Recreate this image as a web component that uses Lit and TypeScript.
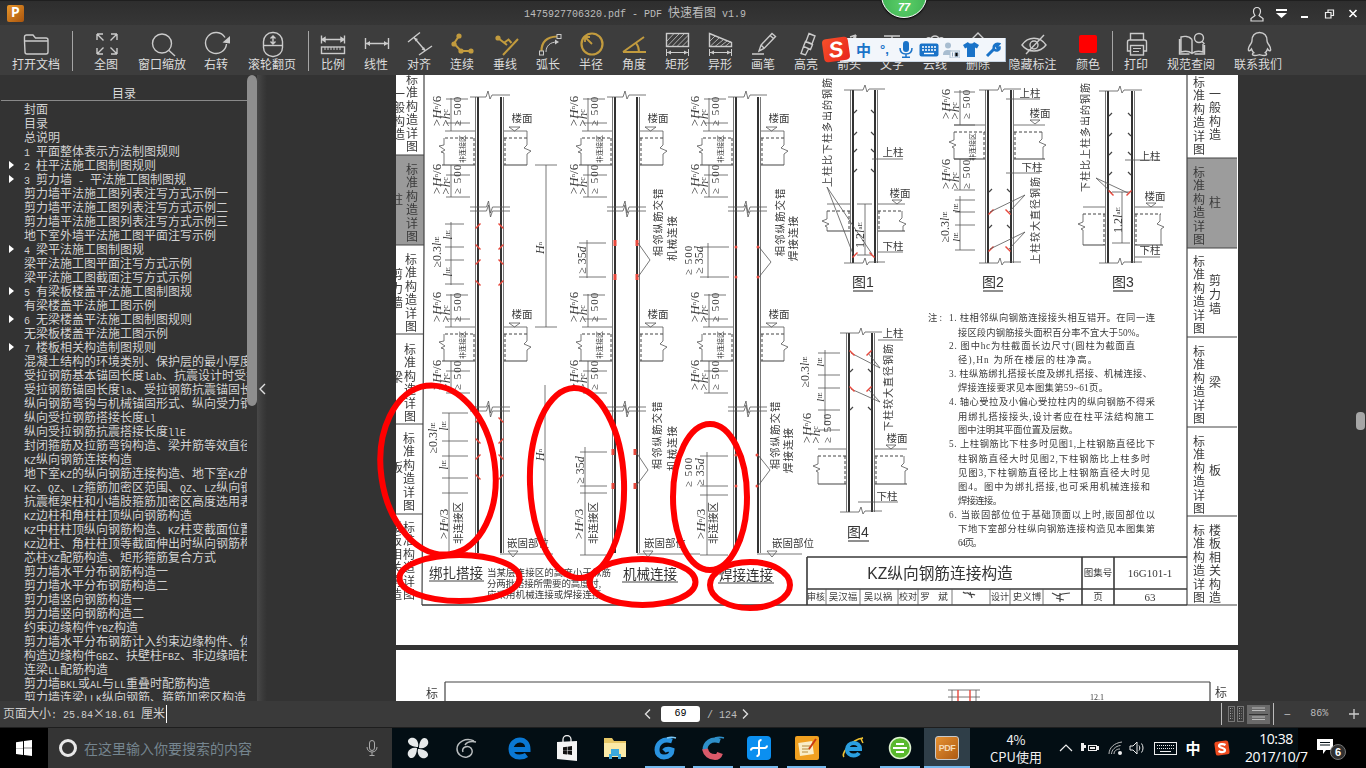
import { LitElement, html, css, svg } from 'lit';
import { customElement } from 'lit/decorators.js';

// ---- helpers for latin runs, which are 6px wide per char in the original bitmap font
const mixed = (text: string) =>
  text.split(/([\x20-\x7e]+)/).map((part, i) => (i % 2 ? html`<span class="l">${part}</span>` : part));

// ---- toolbar icons (30x26 box, center of box = center of the label)
const G = '#c29b3e';
const ic = {
  open: svg`<path d="M3.5 10V6a2 2 0 0 1 2-2h6.5l2.5 3h10.5a2 2 0 0 1 2 2v12a2 2 0 0 1-2 2h-19a2 2 0 0 1-2-2zM3.5 10h23.5"/>`,
  full: svg`<path d="M6 3h6M6 3v6M6 3l6.5 6.5M26 3h-6M26 3v6M26 3l-6.5 6.5M6 23h6M6 23v-6M6 23l6.5-6.5M26 23h-6M26 23v-6M26 23l-6.5-6.5"/>`,
  zoom: svg`<circle cx="15" cy="12.5" r="9.5"/><path d="M22 19.5l6 5.5"/>`,
  rot: svg`<path d="M24 6.5A10.5 10.5 0 1 0 25.5 13"/><path class="fill" d="M29 5v7.5l-7.5-1z"/>`,
  wheel: svg`<rect x="6.5" y="1.5" width="19" height="24" rx="9"/><path d="M6.5 14.5h19"/><path d="M16 5v8M13.5 7.5L16 5l2.5 2.5M13.5 10.5L16 13l2.5-2.5"/>`,
  scale: svg`<path d="M3.5 4.5v8M26.5 4.5v8M4 8.5h22M4 8.5l3-2v4zM26 8.5l-3-2v4z"/><rect x="3.5" y="16" width="23" height="6.5"/><path stroke-width="1" d="M7 16v3M10 16v3M13 16v3M16 16v3M19 16v3M22 16v3"/>`,
  line: svg`<path d="M4.5 7v11M27.5 7v11M5 12.5h22"/><path class="fill" d="M5 12.5l4-2.5v5zM27 12.5l-4-2.5v5z"/>`,
  align: svg`<path d="M4 11L16 1.5M15 24l13-9M10 6.5l11.5 13.5"/><path class="fill" d="M10 6.5l4 1.5-2.5 2.5zM21.5 20l-4-1.5 2.5-2.5z"/>`,
  chain: svg`<g stroke="${G}" stroke-width="2"><path d="M12 5L7 12.5 14 20h10"/></g><g fill="${G}" stroke="none"><circle cx="12" cy="5" r="2.6"/><circle cx="7" cy="13" r="2.6"/><circle cx="14" cy="20" r="2.6"/><circle cx="24" cy="20" r="2.6"/></g>`,
  perp: svg`<g stroke="${G}" stroke-width="2"><path d="M8 7l9 7M28 8L13 24M14.5 11.5l4-3 3 3.5"/></g><circle cx="8" cy="7" r="2.6" fill="${G}" stroke="none"/>`,
  arc: svg`<path stroke="${G}" stroke-width="2.2" d="M8.5 20C8.5 11 14 6 24 5.5"/><path stroke-width="1" d="M13 21c0-6 4-10 11-10"/><path class="fill" d="M26 11l-4-2.5v5z"/><rect stroke-width="1" x="6.5" y="20" width="4" height="4"/><rect stroke-width="1" x="24" y="3.5" width="4" height="4"/>`,
  radius: svg`<circle cx="16" cy="13" r="10.5" stroke="${G}" stroke-width="2.2"/><path stroke="${G}" stroke-width="1.8" d="M16 13L9.5 6.5M9 11V6h5"/>`,
  angle: svg`<path stroke="${G}" stroke-width="2" d="M4 21h23M4 21L25 6M17 12c2 2.5 3 5 3 9"/>`,
  rect: svg`<rect x="4.5" y="2.5" width="22" height="13"/><path stroke-width=".8" d="M5 10l7-7.5M5 15.5L17 3M10 15.5L22 3M15 15.5L26.5 4M20 15.5l6.5-6.5"/><path stroke-width="1" d="M4.5 18v7M26.5 18v7M5 21.5h21"/><path class="fill" d="M5 21.5l4-2v4zM26 21.5l-4-2v4z"/>`,
  shape: svg`<path d="M4.5 2.5l22 9v4h-22z"/><path stroke-width=".8" d="M5 10l5-5M5 15.5L14 7M10 15.5L18 9M15 15.5L22 10M20 15.5l6-5"/><path stroke-width="1" d="M4.5 18v7M26.5 18v7M5 21.5h21"/><path class="fill" d="M5 21.5l4-2v4zM26 21.5l-4-2v4z"/>`,
  pen: svg`<path d="M4 23h12M11 20l2-6L24 2.5l3.5 3L16 17.5zM13 14l3.5 3.5M22 4.5l3.5 3"/>`,
  mark: svg`<path d="M18 2.5l6 2.5-3 8-6-2.5zM14.5 10.5l7 3-2 5-7-3zM12.5 15.5l-2.5 7 4.5 1.5 3-6"/>`,
  arrow: svg`<path d="M8 22L22 4M22 4l-6 2M22 4l-1 6"/>`,
  textT: svg`<path d="M7 5h16M15 5v18"/>`,
  cloud: svg`<path d="M6 14c-3-5 2-9 5-6 1-4 7-4 8 0 3-3 8 1 5 6"/>`,
  del: svg`<path d="M15 2l8 8H7zM8 10v12h14V10"/>`,
  hide: svg`<path d="M4 14c6-9 18-9 24 0-6 8-18 8-24 0z"/><circle cx="16" cy="14" r="4"/><path d="M26 4L8 23"/>`,
  color: svg`<rect x="6" y="4" width="18" height="18" rx="2" fill="#f00" stroke="none"/>`,
  print: svg`<path d="M9.5 9V2.5h13V9M9.5 20H6.5V11a2 2 0 0 1 2-2h15a2 2 0 0 1 2 2v9h-3"/><rect x="9.5" y="14.5" width="13" height="9.5"/><path stroke-width="1" d="M12 17.5h8M12 20.5h6"/>`,
  book: svg`<path d="M16 8.5C13 5 8 5 5 6v15c3-1 8-1 11 1.5 3-2.5 8-2.5 11-1.5v-8M16 8.5v14M3.5 8v15h10M28.5 14v9h-10"/><circle cx="23" cy="7" r="4.5"/><path d="M26 10.5l2.5 2.5"/>`,
  qq: svg`<path d="M16.5 1.5c-5 0-7.5 3.500-7.5 8 0 1-.3 2-1 3-1.5 2-3 5-2.5 7 .4 1 2 0 3-1.500.5 1.500 1.200 2.800 2.300 3.700-1.800.8-2.300 2.800 1 2.800 2 0 3.500-.5 4.700-.8 1.200.3 2.700.8 4.700.8 3.300 0 2.800-2 1-2.800 1.100-.9 1.800-2.200 2.300-3.700 1 1.500 2.600 2.500 3 1.500.5-2-1-5-2.500-7-.7-1-1-2-1-3 0-4.500-2.500-8-7.500-8z"/>`,
};

type Tool = { label?: string; w: number; icon?: any; sep?: boolean };
const tools: Tool[] = [
  { label: '打开文档', w: 72, icon: ic.open },
  { sep: true, w: 1 },
  { label: '全图', w: 66, icon: ic.full },
  { label: '窗口缩放', w: 46, icon: ic.zoom },
  { label: '右转', w: 62, icon: ic.rot },
  { label: '滚轮翻页', w: 50, icon: ic.wheel },
  { w: 11 },
  { sep: true, w: 1 },
  { w: 2.5 },
  { label: '比例', w: 43, icon: ic.scale },
  { label: '线性', w: 43, icon: ic.line },
  { label: '对齐', w: 43, icon: ic.align },
  { label: '连续', w: 43, icon: ic.chain },
  { label: '垂线', w: 43, icon: ic.perp },
  { label: '弧长', w: 43, icon: ic.arc },
  { label: '半径', w: 43, icon: ic.radius },
  { label: '角度', w: 43, icon: ic.angle },
  { label: '矩形', w: 43, icon: ic.rect },
  { label: '异形', w: 43, icon: ic.shape },
  { label: '画笔', w: 43, icon: ic.pen },
  { label: '高亮', w: 43, icon: ic.mark },
  { label: '箭头', w: 43, icon: ic.arrow },
  { label: '文字', w: 43, icon: ic.textT },
  { label: '云线', w: 43, icon: ic.cloud },
  { label: '删除', w: 43, icon: ic.del },
  { label: '隐藏标注', w: 66, icon: ic.hide },
  { label: '颜色', w: 45, icon: ic.color },
  { w: 1.5 },
  { sep: true, w: 1 },
  { label: '打印', w: 46, icon: ic.print },
  { label: '规范查阅', w: 64, icon: ic.book },
  { label: '联系我们', w: 70, icon: ic.qq },
];

// [text, has arrow]
const outline: [string, boolean?][] = [
  ['封面'], ['目录'], ['总说明'], ['1 平面整体表示方法制图规则'], ['2 柱平法施工图制图规则', true],
  ['3 剪力墙 - 平法施工图制图规', true], ['剪力墙平法施工图列表注写方式示例一'], ['剪力墙平法施工图列表注写方式示例二'],
  ['剪力墙平法施工图列表注写方式示例三'], ['地下室外墙平法施工图平面注写示例'], ['4 梁平法施工图制图规', true],
  ['梁平法施工图平面注写方式示例'], ['梁平法施工图截面注写方式示例'], ['5 有梁板楼盖平法施工图制图规', true],
  ['有梁楼盖平法施工图示例'], ['6 无梁楼盖平法施工图制图规则', true], ['无梁板楼盖平法施工图示例'],
  ['7 楼板相关构造制图规则', true], ['混凝土结构的环境类别、保护层的最小厚度'], ['受拉钢筋基本锚固长度lab、抗震设计时受拉钢筋'],
  ['受拉钢筋锚固长度la、受拉钢筋抗震锚固长度'], ['纵向钢筋弯钩与机械锚固形式、纵向受力钢筋'], ['纵向受拉钢筋搭接长度Ll'],
  ['纵向受拉钢筋抗震搭接长度llE'], ['封闭箍筋及拉筋弯钩构造、梁并筋等效直径'], ['KZ纵向钢筋连接构造'],
  ['地下室KZ的纵向钢筋连接构造、地下室KZ的'], ['KZ、QZ、LZ箍筋加密区范围、QZ、LZ纵向钢筋'], ['抗震框架柱和小墙肢箍筋加密区高度选用表'],
  ['KZ边柱和角柱柱顶纵向钢筋构造'], ['KZ中柱柱顶纵向钢筋构造、KZ柱变截面位置'], ['KZ边柱、角柱柱顶等截面伸出时纵向钢筋构造'],
  ['芯柱XZ配筋构造、矩形箍筋复合方式'], ['剪力墙水平分布钢筋构造一'], ['剪力墙水平分布钢筋构造二'], ['剪力墙竖向钢筋构造一'],
  ['剪力墙竖向钢筋构造二'], ['约束边缘构件YBZ构造'], ['剪力墙水平分布钢筋计入约束边缘构件、体积配箍率'],
  ['构造边缘构件GBZ、扶壁柱FBZ、非边缘暗柱'], ['连梁LL配筋构造'], ['剪力墙BKL或AL与LL重叠时配筋构造'],
  ['剪力墙连梁LLK纵向钢筋、箍筋加密区构造'],
];

// ---- the scanned drawing: free canvas, all coordinates are screen pixels through the viewBox
const P = (d: string, cls = 'thin') => svg`<path class=${cls} d=${d}/>`;
const T = (t: any, x: number, y: number, size = 11, cls = '') =>
  svg`<text class=${'t ' + cls} x=${x} y=${y} font-size=${size} text-anchor="middle" dominant-baseline="central">${t}</text>`;
const R = (t: any, x: number, y: number, size = 11, cls = '') =>
  svg`<text class=${'t ' + cls} x=${x} y=${y} font-size=${size} text-anchor="middle" dominant-baseline="central" transform=${`rotate(-90 ${x} ${y})`}>${t}</text>`;
// stacked upright characters
const V = (t: string, x: number, yTop: number, step = 13.4, size = 12) =>
  Array.from(t).map((c, i) => T(c, x, yTop + i * step, size));
const Hn = svg`&gt;<tspan font-style="italic">H</tspan><tspan font-size="7">n</tspan>`;
const lE = svg`<tspan font-style="italic">l</tspan><tspan font-size="7">lE</tspan>`;
const laE = svg`1.2<tspan font-style="italic">l</tspan><tspan font-size="7">aE</tspan>`;
const d35 = svg`≥ 35<tspan font-style="italic">d</tspan>`;

function bars(x1: number, x2: number, y1: number, y2: number) {
  return svg`${P(`M${x1} ${y1}V${y2}M${x2} ${y1}V${y2}`, 'bar')}${P(`M${x1 - 2.5} ${y1}V${y2}M${x2 + 2.5} ${y1}V${y2}`)}`;
}

function brk(x1: number, x2: number, y: number, double = false) {
  const m = (x1 + x2) / 2;
  const one = (yy: number) => `M${x1 - 8} ${yy}H${m - 3}l2-6 2 12 2-6H${x2 + 9}`;
  return P(one(y) + (double ? one(y + 4) : ''));
}

function dims(x1: number, y: number) {
  return svg`
    ${R(svg`${Hn}/6`, x1 - 42, y, 13)}
    ${R(svg`&gt;<tspan font-style="italic">h</tspan><tspan font-size="8">c</tspan>`, x1 - 33, y + 7, 13)}
    ${R('≥ 500', x1 - 21, y, 11, 'sp')}`;
}

function floor(x1: number, x2: number, y: number) {
  const low = y + 34;
  return svg`
    ${P(`M${x1 - 33} ${y}H${x1 - 3}M${x2 + 3} ${y}H${x2 + 26}V${y + 14}l-3 3 7 3-4 3V${low}`)}
    ${P(`M${x1 - 34} ${y + 7}V${y + 14}l-5 1 6 4-4 2 3 1V${low}`)}
    ${P(`M${x1 - 33} ${y + 7}H${x1 - 3}M${x1 - 4} ${y + 7}V${low}M${x2 + 3} ${y + 7}H${x2 + 26}M${x2 + 4} ${y + 7}V${low}`, 'dash')}
    ${P(`M${x1 - 36} ${low}H${x1 - 3}M${x2 + 3} ${low}H${x2 + 26}`, 'mid')}
    ${P(`M${x2 + 8} ${y - 4}h11l-5.5 4z`)}
    ${T('楼面', x2 + 21, y - 13, 10.5)}
    ${P(`M${x1 - 27} ${y - 33}V${y}M${x1 - 27} ${low}V${y + 66}M${x1 - 32} ${y - 32}H${x1 - 10}M${x1 - 32} ${y - 8}H${x1 - 8}M${x1 - 32} ${y + 66}H${x1 - 8}M${x1 - 32} ${y + 44}H${x1 - 8}`)}
    ${dims(x1, y - 20)}
    ${dims(x1, y + 48)}
    ${R('非连接区', x1 - 15, y + 18, 7)}`;
}

const redTick = (x: number, y: number, flip = false) =>
  P(flip ? `M${x - 2.5} ${y - 2.5}l5 5` : `M${x - 2.5} ${y + 2.5}l5-5`, 'red');

function column(n: number) {
  const [x1, x2] = [[478, 501], [615, 637], [736, 758]][n];
  return svg`
    ${bars(x1, x2, 97, 553)}
    ${P(`M${x1 - 8} 97H${x1 + 8}l2-6 2 8 2-4H${x2 + 9}`)}
    ${floor(x1, x2, 131)}
    ${brk(x1, x2, 207, true)}
    ${floor(x1, x2, 327)}
    ${brk(x1, x2, 407, true)}`;
}

function lapDims() {
  const x = 478;
  const ly = [224, 247, 260, 284];
  return svg`
    ${P(`M451 222V285${ly.map(y => `M445 ${y}H464`).join('')}`)}
    ${R(svg`≥0.3${lE}`, 437, 252, 12)}
    ${R(lE, 448, 235, 12)}
    ${R(lE, 448, 272, 12)}
    ${[226, 247, 262, 283].map((y, i) => svg`${redTick(x, y, i % 2 == 1)}${redTick(501, y, i % 2 == 0)}`)}
    ${P('M546 165V327M535 165H557M535 327H557')}
    ${R(svg`<tspan font-style="italic">H</tspan><tspan font-size="7">n</tspan>`, 540, 248, 12)}
    ${P('M449 413V553M442 413H468M442 441H468M442 456H468M442 478H468M442 493H468M442 553H468')}
    ${R(svg`≥0.3${lE}`, 433, 438, 12)}
    ${R(lE, 444, 426, 12)}
    ${R(lE, 444, 465, 12)}
    ${R(svg`${Hn}/3`, 443, 524, 13)}
    ${R('非连接区', 458, 523, 10.5)}
    ${[420, 441, 457, 477].map((y, i) => svg`${redTick(478, y, i % 2 == 1)}${redTick(501, y, i % 2 == 0)}`)}`;
}

const redBox = (x: number, y: number) => svg`<rect class="redf" x=${x - 1.5} y=${y - 3} width="3" height="6"/>`;
const redDot = (x: number, y: number) => svg`<circle class="redf" cx=${x} cy=${y} r="1.5"/>`;

function mechDims() {
  return svg`
    ${P('M587 240V278M579 243H606M579 277H606')}
    ${R(d35, 582, 260, 12)}
    ${[[615, 243], [637, 243], [615, 277], [637, 277]].map(([x, y]) => redBox(x, y))}
    ${P('M638 243L650 260 638 277')}
    ${R('相邻纵筋交错', 658, 222, 10.5, 'sp')}
    ${R('机械连接', 672, 238, 10.5, 'sp')}
    ${P('M585 447V555M580 452H607M580 486H607M580 493H607M580 555H607')}
    ${R(d35, 580, 470, 12)}
    ${R(svg`${Hn}/3`, 578, 524, 13)}
    ${R('非连接区', 593, 523, 10.5)}
    ${[[613, 452], [635, 452], [613, 486], [635, 486]].map(([x, y]) => redBox(x, y))}
    ${P('M636 452L648 470 636 486')}
    ${R('相邻纵筋交错', 657, 435, 10.5, 'sp')}
    ${R('机械连接', 672, 448, 10.5, 'sp')}
    ${P('M545 385V553')}
    ${R(svg`<tspan font-style="italic">H</tspan><tspan font-size="7">n</tspan>`, 540, 455, 12)}`;
}

function weldDims() {
  return svg`
    ${P('M708 243V278M700 247H729M700 277H729')}
    ${R('≥ 500', 688, 260, 11, 'sp')}
    ${R(d35, 699, 260, 12)}
    ${[[736, 247], [758, 247], [736, 277], [758, 277]].map(([x, y]) => redDot(x, y))}
    ${P('M759 247L771 262 759 277')}
    ${R('相邻纵筋交错', 780, 222, 10.5, 'sp')}
    ${R('焊接连接', 793, 238, 10.5, 'sp')}
    ${P('M707 452V555M700 456H728M700 486H728M700 495H728M700 555H728')}
    ${R('≥ 500', 688, 472, 11, 'sp')}
    ${R(d35, 700, 472, 12)}
    ${R(svg`${Hn}/3`, 700, 524, 13)}
    ${R('非连接区', 713, 523, 10.5)}
    ${[[736, 455], [757, 455], [736, 486], [757, 486]].map(([x, y]) => redDot(x, y))}
    ${P('M758 455L770 470 758 486')}
    ${R('相邻纵筋交错', 775, 435, 10.5, 'sp')}
    ${R('焊接连接', 788, 450, 10.5, 'sp')}`;
}

const anchor = (tx: number, triX: number, x1: number, x2: number) => svg`
  ${T('嵌固部位', tx, 543, 10.5)}
  ${P(`M${x1} 554H${x2}M${triX - 5} 551h10l-5 6z`)}`;

// small black bar marks on right hand figures
const blackTicks = (x: number, ys: number[], dir: number) =>
  P(ys.map(y => `M${x} ${y}l${dir * 3} -3`).join(''), 'mid');

function rFloor(x1: number, x2: number, y: number, lx: number, rx: number, h = 27) {
  return svg`
    ${P(`M${lx} ${y}H${x1 - 3}M${x2 + 3} ${y}H${rx}`)}
    ${P(`M${lx} ${y + 7}H${x1 - 3}M${x1 - 4} ${y + 7}V${y + h}M${x2 + 3} ${y + 7}H${rx - 2}M${x2 + 4} ${y + 7}V${y + h}`, 'dash')}
    ${P(`M${lx} ${y + 7}V${y + 15}l-5 2 7 3-4 2 2 1V${y + h}M${rx - 3} ${y + 7}V${y + 14}l-3 3 7 3-3 2V${y + h}`)}
    ${P(`M${lx} ${y + h}H${x1 - 3}M${x2 + 3} ${y + h}H${rx}`, 'mid')}`;
}

function rTop(x1: number, x2: number, y: number) {
  return P(`M${x1 - 9} ${y}H${x1 + 10}l2-5 2 7 2-3H${x2 + 10}`);
}

function figures() {
  return svg`
    <!-- fig 1 -->
    ${bars(853, 875, 90, 263)}${rTop(853, 875, 90)}${rTop(853, 875, 263)}
    ${rFloor(853, 875, 204, 827, 905)}
    ${blackTicks(854, [113, 135, 152, 172], 1)}${blackTicks(874, [113, 135, 152, 172], -1)}
    ${T('上柱', 893, 152, 10.5)}${P('M872 159H903')}
    ${T('楼面', 900, 193, 10.5)}${P('M892 200h10l-5 4z')}
    ${T('下柱', 893, 246, 10.5)}${P('M878 252H903')}
    ${R('上柱比下柱多出的钢筋', 827, 132, 10, 'sp')}
    ${P('M827 187L853 254M827 187L872 254M865 204V255M857 204H872M857 255H872')}
    ${R(laE, 860, 235, 12)}
    ${redTick(855, 255)}${redTick(872, 255, true)}
    ${T('图1', 863, 282, 14, 'fig')}${P('M853 291H873', 'mid')}

    <!-- fig 2 -->
    ${bars(988, 1011, 90, 263)}${rTop(988, 1011, 90)}${rTop(988, 1011, 263)}
    ${rFloor(988, 1011, 125, 954, 1045, 34)}
    ${T('上柱', 1030, 93, 10.5)}${P('M1006 99H1040')}
    ${T('楼面', 1040, 113, 10.5)}${P('M1030 120h10l-5 4z')}
    ${T('下柱', 1032, 167, 10.5)}${P('M1006 173H1040')}
    ${P('M960 90V125M960 159V190M960 196V250M954 92H975M954 125H975M954 159H975M954 190H975M955 200H975M955 212H975M955 225H975M955 250H975')}
    ${dims(987, 104)}${dims(987, 174)}
    ${R('非连接区', 973, 147, 7)}
    ${R(svg`≥0.3${lE}`, 945, 227, 12)}
    ${R(lE, 956, 208, 11)}
    ${R(lE, 956, 237, 11)}
    ${redTick(991, 212)}${redTick(1008, 212, true)}${redTick(991, 249)}${redTick(1008, 249, true)}
    ${blackTicks(989, [192, 228], 1)}${blackTicks(1010, [192, 228], -1)}
    ${P('M990 212L1025 195M1009 212L1025 195M990 249L1025 232M1009 249L1025 232')}
    ${R('上柱较大直径钢筋', 1035, 220, 10, 'sp')}
    ${T('图2', 993, 282, 14, 'fig')}${P('M983 291H1003', 'mid')}

    <!-- fig 3 -->
    ${bars(1108, 1132, 91, 263)}${rTop(1108, 1132, 91)}${rTop(1108, 1132, 263)}
    ${rFloor(1108, 1132, 207, 1083, 1163, 38)}
    ${blackTicks(1109, [116, 136, 155, 175], 1)}${blackTicks(1131, [116, 136, 155, 175], -1)}
    ${T('上柱', 1150, 156, 10.5)}${P('M1125 160H1160')}
    ${T('楼面', 1155, 196, 10.5)}${P('M1146 203h10l-5 4z')}
    ${T('下柱', 1150, 250, 10.5)}${P('M1135 257H1160')}
    ${R('下柱比上柱多出的钢筋', 1085, 137, 10, 'sp')}
    ${P('M1096 178L1112 193M1096 178L1128 193M1122 192V243M1112 192H1130M1112 243H1130')}
    ${R(laE, 1118, 220, 12)}
    ${redTick(1111, 193, true)}${redTick(1129, 193)}
    ${T('图3', 1123, 282, 14, 'fig')}${P('M1113 291H1133', 'mid')}

    <!-- fig 4 -->
    ${bars(849, 872, 333, 512)}${rTop(849, 872, 333)}${rTop(849, 872, 512)}
    ${rFloor(849, 872, 449, 818, 907, 35)}
    ${T('上柱', 893, 333, 10.5)}${P('M878 340H903')}
    ${T('楼面', 897, 438, 10.5)}${P('M886 445h10l-5 4z')}
    ${T('下柱', 887, 496, 10.5)}${P('M858 502H898')}
    ${R('下柱较大直径钢筋', 888, 387, 10, 'sp')}
    ${P('M825 350V425M818 353H840M818 375H840M818 388H840M818 410H840M818 430H840M880 368L851 353M880 368L868 353M880 402L851 389M880 402L868 389')}
    ${R(svg`≥0.3${lE}`, 805, 372, 12)}
    ${R(lE, 820, 362, 11)}
    ${R(lE, 820, 397, 11)}
    ${dims(848, 428)}
    ${redTick(852, 353, true)}${redTick(869, 353)}${redTick(852, 389, true)}${redTick(869, 389)}
    ${blackTicks(850, [372, 410], 1)}${blackTicks(871, [372, 410], -1)}
    ${T('图4', 858, 532, 14, 'fig')}${P('M848 541H869', 'mid')}`;
}

const notes: [string, number, number, number][] = [
  ['注:', 928, 942, 317],
  ['1. 柱相邻纵向钢筋连接接头相互错开。在同一连', 949, 1155, 317],
  ['接区段内钢筋接头面积百分率不宜大于50%。', 958, 1145, 332],
  ['2. 图中hc为柱截面长边尺寸(圆柱为截面直', 949, 1135, 345],
  ['径),Hn 为所在楼层的柱净高。', 958, 1097, 359],
  ['3. 柱纵筋绑扎搭接长度及绑扎搭接、机械连接、', 949, 1152, 373],
  ['焊接连接要求见本图集第59~61页。', 958, 1108, 387],
  ['4. 轴心受拉及小偏心受拉柱内的纵向钢筋不得采', 949, 1155, 401],
  ['用绑扎搭接接头,设计者应在柱平法结构施工', 958, 1154, 416],
  ['图中注明其平面位置及层数。', 958, 1078, 429],
  ['5. 上柱钢筋比下柱多时见图1,上柱钢筋直径比下', 949, 1155, 443],
  ['柱钢筋直径大时见图2,下柱钢筋比上柱多时', 958, 1150, 458],
  ['见图3,下柱钢筋直径比上柱钢筋直径大时见', 958, 1150, 472],
  ['图4。图中为绑扎搭接,也可采用机械连接和', 958, 1150, 486],
  ['焊接连接。', 958, 1002, 500],
  ['6. 当嵌固部位位于基础顶面以上时,嵌固部位以', 949, 1155, 514],
  ['下地下室部分柱纵向钢筋连接构造见本图集第', 958, 1155, 528],
  ['64页。', 958, 982, 542],
];

function tabs() {
  return svg`
    <rect x="396" y="155" width="28" height="90" fill="#9a9a9a"/>
    <rect x="1187" y="158" width="50" height="90" fill="#9c9c9c"/>
    ${P('M424 75V245L422 605M396 155H424M396 245H424M396 334H423M396 424H423M396 514H422', 'mid')}
    ${P('M1187 75V605M1187 158H1237M1187 248H1237M1187 337H1237M1187 427H1237M1187 516H1237M1187 605H1237', 'mid')}
    ${V('标准构造详图', 412, 80)}${V('标准构造详图', 412, 170)}${V('标准构造详图', 411, 260)}
    ${V('标准构造详图', 410, 350)}${V('标准构造详图', 409, 439)}${V('标准构造详图', 409, 528)}
    ${V('一般构造', 399, 95)}${V('柱', 397, 200)}${V('剪力墙', 397, 275, 14)}${V('梁', 397, 378)}${V('板', 397, 468)}${V('楼板相关构造', 396, 528)}
    ${V('标准构造详图', 1199, 83)}${V('一般构造', 1215, 95)}
    ${V('标准构造详图', 1199, 173)}${V('柱', 1215, 203)}
    ${V('标准构造详图', 1199, 262)}${V('剪力墙', 1215, 281, 14)}
    ${V('标准构造详图', 1199, 352)}${V('梁', 1215, 383)}
    ${V('标准构造详图', 1199, 442)}${V('板', 1215, 471)}
    ${V('标准构造详图', 1199, 531)}${V('楼板相关构造', 1215, 531)}`;
}

function titleBlock() {
  return svg`
    ${P('M422 605H1187', 'heavy')}
    ${P('M807 557H1187M807 557V605M1082 557V605M1114 557V605M807 589H1187', 'heavy')}
    ${P('M826 589V605M860 589V605M898 589V605M918 589V605M952 589V605M990 589V605M1010 589V605M1043 589V605')}
    ${T('KZ纵向钢筋连接构造', 940, 573, 15.7, 'fig')}
    ${T('图集号', 1098, 573, 9.5)}${T('16G101-1', 1150, 573, 11)}
    ${T('页', 1098, 597, 9.5)}${T('63', 1150, 597, 11)}
    ${T('审核', 816, 597, 9)}${T('吴汉福', 843, 597, 9.5)}${T('吴以祸', 878, 597, 9.5)}
    ${T('校对', 908, 597, 9)}${T('罗', 925, 597, 9.5)}${T('斌', 943, 597, 9.5)}
    ${T('设计', 1000, 597, 9)}${T('史义博', 1027, 597, 9.5)}
    ${P('M963 592c3 3 4-1 6 2 2 2 3-1 6 1M970 592l2 6M1052 593l6 3 4-2 8-1M1060 593v9M1056 598l8 2', 'mid')}`;
}

function drawing() {
  return svg`
    <clipPath id="sheet"><rect x="396" y="75" width="842" height="570"/></clipPath>
    <g clip-path="url(#sheet)"><g class="scan">
      ${tabs()}
      ${column(0)}${column(1)}${column(2)}
      ${lapDims()}${mechDims()}${weldDims()}
      ${anchor(528, 513, 500, 553)}${anchor(665, 648, 637, 700)}${anchor(793, 772, 757, 802)}
      ${T('绑扎搭接', 456, 573, 13.5, 'fig')}${P('M429 581H484', 'mid')}
      ${T('机械连接', 650, 574, 13.5, 'fig')}${P('M622 582H678', 'mid')}
      ${T('焊接连接', 746, 575, 13.5, 'fig')}${P('M718 583H774', 'mid')}
      <text class="t" x="487" y="576" font-size="9.5" textLength="124">当某层连接区的高度小于纵筋</text>
      <text class="t" x="487" y="587" font-size="9.5" textLength="114">分两批搭接所需要的高度时,</text>
      <text class="t" x="487" y="598" font-size="9.5" textLength="124">应采用机械连接或焊接连接。</text>
      ${figures()}
      ${notes.map(([t, x, end, y]) => svg`<text class="t" x=${x} y=${y + 3.5} font-size="9.3" textLength=${end - x}>${t}</text>`)}
      ${titleBlock()}
    </g></g>
    <g class="ring">
      <ellipse cx="438" cy="470" rx="57" ry="85" transform="rotate(-8 438 470)"/>
      <ellipse cx="577" cy="483" rx="47" ry="95" transform="rotate(-2 577 483)"/>
      <ellipse cx="710" cy="497" rx="37" ry="73"/>
      <ellipse cx="459.5" cy="578" rx="60" ry="23"/>
      <ellipse cx="642.5" cy="582" rx="53" ry="23"/>
      <ellipse cx="750" cy="585" rx="40" ry="23"/>
    </g>`;
}

function nextPage() {
  return svg`
    <g class="scan">
      ${P('M445 682H1210M445 682V701M1210 682V701', 'mid')}
      ${T('标', 432, 694, 12)}${T('标', 1221, 693, 12)}
      ${P('M948 690H980M952 690V701M976 690V701M948 697H980')}
      ${P('M958 690V701M970 690V701', 'red')}
      ${T('12.1', 1097, 697, 8)}
    </g>`;
}

// ---- taskbar pieces, x given by icon center
type Slot = { c: number; w: number; t: any };
const placed = (items: Slot[], start: number) => {
  let x = start;
  return items.map(it => {
    const m = it.c - it.w / 2 - x;
    x = it.c + it.w / 2;
    return html`<div class="slot" style="width:${it.w}px;margin-left:${m}px">${it.t}</div>`;
  });
};

const win4 = (x: number, y: number, a: number, f = '#fff') =>
  svg`<path fill=${f} d=${`M${x} ${y + a * .14}l${a * .44} -${a * .06}v${a * .42}h-${a * .44}zM${x + a * .5} ${y + a * .07}L${x + a} ${y}v${a * .48}h-${a * .5}zM${x} ${y + a * .52}h${a * .44}v${a * .42}l-${a * .44} -${a * .06}zM${x + a * .5} ${y + a * .52}h${a * .5}V${y + a}l-${a * .5} -${a * .07}z`}/>`;

const petal = 'M12 11C9 11 3 10 2 6c-.5-3 3-5 6-4 3 1 5 5 4 9z';
const bar = {
  pin: html`<svg width="24" height="24" viewBox="0 0 24 24" fill="#e6e9ea"><path d=${petal}/><path transform="rotate(90 12 12)" d=${petal}/><path transform="rotate(180 12 12)" d=${petal}/><path transform="rotate(270 12 12)" d=${petal}/></svg>`,
  swirl: html`<svg width="24" height="24" viewBox="0 0 24 24" fill="none" stroke="#b8bcbe" stroke-width="1.5"><path d="M20 5C12 1 3 6 3 13c0 5 5 9 10 8 4-1 6-4 5-7-1-3-4-4-7-3-2 1-3 3-2 5"/><path d="M22 6c-5-1-9 0-11 3"/></svg>`,
  edge: html`<svg width="24" height="24" viewBox="0 0 24 24" fill="none"><path stroke="#0a78d4" stroke-width="5" d="M4 13.5h16c0-6-3.500-9.500-8-9.500-5 0-9 4-9 9 0 5.500 4 8 8.500 8 3 0 5.500-.8 7-2"/></svg>`,
  store: html`<svg width="24" height="26" viewBox="0 0 24 26"><path fill="none" stroke="#eee" stroke-width="1.3" d="M8 8V4.5a3.5 3.5 0 0 1 8 0V8"/><path fill="#f4f4f4" d="M2 7l20-1v20l-20-2z"/>${win4(8, 11, 9, '#111')}</svg>`,
  explorer: html`<svg width="24" height="22" viewBox="0 0 24 22"><path fill="#e7c766" d="M1 1h8l2 3h12v16H1z"/><path fill="#fbe9a6" d="M1 6h22v14H1z"/><path fill="#3ca9dc" d="M8 12h8v5h2v5h-3v-3h-6v3H6v-5h2z"/></svg>`,
  g1: html`<svg width="24" height="24" viewBox="0 0 24 24" fill="none"><path stroke="#2a93e0" stroke-width="5" d="M19 5C10 2 4 7 4 14c0 4 3 7 7 7 5 0 8-3 8-7-3-1-6-1-8 1"/><path stroke="#7cc6f4" stroke-width="1.5" d="M14 2c3-1 6-1 9 0"/></svg>`,
  g2: html`<svg width="24" height="24" viewBox="0 0 24 24" fill="none"><path stroke="#2e8fc9" stroke-width="5" d="M19 5C10 2 4 7 4 14"/><path stroke="#2e8fc9" stroke-width="1.5" d="M14 2c3-1 6-1 9 0"/><path stroke="#d95a6a" stroke-width="6" d="M4 13c1 5 5 8 10 8 3 0 4-1 5-4"/></svg>`,
  blue: html`<svg width="24" height="24" viewBox="0 0 24 24"><rect width="24" height="24" rx="4" fill="#0b8ff0"/><path fill="none" stroke="#fff" stroke-width="2" d="M12 12V6a2.5 2.5 0 0 1 2.500-2M12 12H6a2.500 2.500 0 0 0-2 2.500M12 12v6a2.500 2.500 0 0 1-2.500 2M12 12h6a2.500 2.500 0 0 0 2-2.500"/></svg>`,
  note: html`<svg width="24" height="24" viewBox="0 0 24 24"><rect width="24" height="24" rx="2" fill="#f0a020"/><rect x="4" y="6" width="14" height="13" fill="#f9edc7" transform="rotate(-8 11 12)"/><path stroke="#b58a3a" d="M7 10h8M7 13h8M7 16h6"/><path stroke="#c83a14" stroke-width="2" d="M14 13L21 3"/></svg>`,
  ie: html`<svg width="24" height="24" viewBox="0 0 24 24" fill="none"><path stroke="#f1c232" stroke-width="1.5" d="M3 21c-3-3 6-17 19-19-3 0-1 3 0 5"/><path stroke="#2a9fe0" stroke-width="4" d="M6 13h13c0-4-3-6-6.500-6C9 7 6 10 6 13.500 6 17 9 19.500 12.500 19.500c2.500 0 4.500-1 5.500-2.500"/></svg>`,
  green: html`<svg width="24" height="24" viewBox="0 0 24 24"><circle cx="12" cy="12" r="10.5" fill="#59b92d" stroke="#dff3d2" stroke-width="1.5"/><path stroke="#fff" stroke-width="2" d="M5 12h14M8 8h8M8 16h8"/></svg>`,
};

const tray = {
  up: html`<svg width="14" height="10" viewBox="0 0 14 10" fill="none" stroke="#eee" stroke-width="1.2"><path d="M1 8l6-6 6 6"/></svg>`,
  batt: html`<svg width="18" height="12" viewBox="0 0 18 12"><path fill="#eee" d="M0 1h3v2h2v3H3v3H0zM3 3h2M7 3h9v1h2v4h-2v1H7z"/><path fill="#0a0f12" d="M8 4h7v4H8z"/><path fill="#eee" d="M9 5h5v2H9z"/></svg>`,
  wifi: html`<svg width="16" height="16" viewBox="0 0 16 16" fill="none" stroke="#bbb" stroke-width="1"><path d="M1 14C1 8 6 3 14 2M3.500 14c0-4 4-8 9-8.500M6 14c0-3 2.500-5 6-5"/><circle cx="12" cy="13" r="2" fill="#eee" stroke="none"/></svg>`,
  sound: html`<svg width="16" height="14" viewBox="0 0 16 14" fill="none" stroke="#eee" stroke-width="1"><path d="M1 5h3l4-4v12l-4-4H1zM10 4.500c1 1.500 1 3.500 0 5M12.500 2.500c2 2.500 2 6.500 0 9"/></svg>`,
  kbd: html`<svg width="23" height="13" viewBox="0 0 23 13" fill="none" stroke="#eee"><rect x=".5" y=".5" width="22" height="12"/><path stroke-dasharray="1 1" d="M3 3.500h17M3 6.500h17"/><path d="M6 9.500h11"/></svg>`,
};

@customElement('app-root')
export class AppRoot extends LitElement {
  static styles = css`
    :host {
      display: block;
      width: 1366px;
      height: 768px;
      overflow: hidden;
      position: relative;
      background: #333;
      color: #d6d6d6;
      font-family: 'Noto Sans CJK SC', 'Liberation Sans', sans-serif;
      font-size: 12px;
      line-height: 14px;
    }
    .l { font: 10px/14px 'Liberation Mono', monospace; white-space: pre; }

    .title { height: 25px; display: flex; align-items: center; background: linear-gradient(#2e2e2e, #363636); border-top: 1px solid #1f1f1f; box-sizing: border-box; }
    .logo { width: 17px; height: 17px; margin-left: 7px; border-radius: 2px; background: linear-gradient(135deg, #e8962a, #a9540d); color: #fff; font: bold 14px/17px 'Liberation Mono', monospace; text-align: center; }
    .name { margin-left: 500px; color: #bdbdbd; white-space: nowrap; }
    .win { margin-left: auto; display: flex; align-items: center; }
    .win svg { display: block; }

    .tools { height: 50px; display: flex; background: #3d3d3d; padding-top: 6px; box-sizing: border-box; }
    .tool { display: flex; flex-direction: column; align-items: center; flex: none; }
    .tool svg { width: 30px; height: 26px; flex: none; overflow: visible; fill: none; stroke: #cbcbcb; stroke-width: 1.4; }
    .tool svg .fill { fill: #cbcbcb; stroke: none; }
    .tool span { white-space: nowrap; color: #dcdcdc; }
    .sep { flex: none; width: 1px; height: 40px; background: #a5a5a5; }

    .main { height: 626px; display: flex; background: #333; }
    .side { width: 247px; flex: none; overflow: hidden; }
    .side h4 { margin: 0 0 1px 1px; height: 26px; box-sizing: border-box; border-bottom: 1px solid #8a8a8a; font: inherit; padding-top: 11px; text-align: center; color: #dcdcdc; }
    .row { display: flex; white-space: nowrap; height: 14px; color: #d2d2d2; }
    .arrow { width: 24px; flex: none; display: flex; align-items: center; padding-left: 9px; box-sizing: border-box; }
    .arrow i { border-left: 5px solid #fff; border-top: 4.5px solid transparent; border-bottom: 4.5px solid transparent; }
    .track { width: 10px; flex: none; }
    .thumb { height: 331px; background: #8e8e8e; border-radius: 5px / 6px; }
    .grip { width: 10px; flex: none; background: linear-gradient(90deg, #484848, #3a3a3a 60%, #333); display: flex; align-items: flex-start; }
    .grip svg { margin-top: 307px; }
    .view { flex: 1; display: flex; overflow: hidden; }
    .pages { width: 842px; margin-left: 129px; flex: none; display: flex; flex-direction: column; gap: 5px; }
    .pages svg { display: block; background: #fff; flex: none; overflow: visible; }
    .vbar { margin-left: auto; width: 11px; flex: none; padding-top: 337px; }
    .vbar i { display: block; width: 9px; height: 18px; margin-left: 1px; border-radius: 4px; background: #a6a6a6; }

    .scan { filter: blur(0.35px); }
    .thin { fill: none; stroke: #555; stroke-width: .8; }
    .mid { fill: none; stroke: #444; stroke-width: 1.2; }
    .heavy { fill: none; stroke: #3a3a3a; stroke-width: 1.6; }
    .bar { fill: none; stroke: #333; stroke-width: 2; }
    .dash { fill: none; stroke: #444; stroke-width: 1; stroke-dasharray: 3 2; }
    .red { fill: none; stroke: #e8483c; stroke-width: 1.4; }
    .redf { fill: #e8483c; }
    .t { fill: #3a3a3a; font-family: 'Liberation Serif', 'Noto Sans CJK SC', serif; }
    .t.fig { font-family: 'Liberation Sans', 'Noto Sans CJK SC', sans-serif; fill: #333; }
    .t.sp { letter-spacing: 1px; }
    .ring ellipse { fill: none; stroke: #f00; stroke-width: 6; }

    .status { height: 27px; display: flex; align-items: center; background: #3a3a3a; border-bottom: 1px solid #1e1e1e; box-sizing: border-box; color: #cfcfcf; }
    .size { width: 163px; margin-left: 3px; white-space: nowrap; flex: none; }
    .caret { width: 1px; height: 18px; background: #fff; flex: none; }
    .pager { margin-left: 475px; display: flex; align-items: center; flex: none; }
    .pager svg { display: block; flex: none; }
    .input { width: 39px; height: 16px; background: #fff; border-radius: 3px; color: #000; text-align: center; margin: 0 7px; font: 10px/16px 'Liberation Mono', monospace; }
    .of { width: 32px; color: #bdbdbd; white-space: pre; }
    .right { margin-left: auto; display: flex; align-items: center; height: 26px; flex: none; }
    .rule { width: 1px; height: 22px; background: #bbb; }
    .layout { width: 51px; display: flex; align-items: center; gap: 3px; padding-left: 6px; box-sizing: border-box; }
    .zoom { width: 92px; display: flex; align-items: center; justify-content: space-between; padding: 0 6px 0 10px; box-sizing: border-box; color: #bbb; }

    .task { height: 40px; display: flex; align-items: center; background: #030e14; color: #fff; }
    .start { width: 48px; height: 40px; flex: none; background: #000; display: flex; align-items: center; justify-content: center; }
    .search { width: 344px; height: 40px; flex: none; background: #343434; display: flex; align-items: center; box-sizing: border-box; padding-left: 11px; color: #75858f; font-size: 14px; }
    .search .cortana { width: 18px; height: 18px; border-radius: 50%; border: 3px solid #e8e8e8; box-sizing: border-box; margin-right: 7px; flex: none; }
    .search svg { margin-left: auto; margin-right: 14px; }
    .slot { flex: none; height: 40px; display: flex; align-items: center; justify-content: center; box-sizing: border-box; position: relative; }
    .ul { position: absolute; left: 0; right: 0; bottom: 0; height: 2px; background: #76b9ed; }
    .cpu { text-align: center; font-size: 13px; line-height: 17px; flex: none; width: 80px; margin-left: 6px; color: #f1f1f1; }
    .cpu b { display: block; font-weight: 400; }
    .appbox { width: 46px; height: 40px; background: #2f3e48; display: flex; align-items: center; justify-content: center; }
    .appicon { width: 24px; height: 24px; border-radius: 3px; background: linear-gradient(135deg, #e69232, #ad5a12); border: 1px solid #c9c9c9; box-sizing: border-box; font: bold 9px/22px 'Liberation Sans', sans-serif; text-align: center; color: #f5dcb8; letter-spacing: -.5px; }
    .zh { font-size: 15px; font-weight: 700; }
    .clock { width: 62px; flex: none; text-align: center; font: 14px/18px 'Open Sans', 'Liberation Sans', sans-serif; margin-left: 13px; white-space: nowrap; letter-spacing: -.4px; position: relative; z-index: 1; }
    .notify { width: 69px; margin-left: -9px; height: 40px; flex: none; background: #000; position: relative; }
    .notify svg { position: absolute; left: 19px; top: 11px; }
    .notify b { position: absolute; left: 32px; top: 16px; width: 16px; height: 16px; border-radius: 50%; background: #2f2f2f; border: 1px solid #777; box-sizing: border-box; text-align: center; font: bold 11px/14px 'Liberation Sans', sans-serif; }

    .badge { position: absolute; left: 881px; top: -28px; width: 46px; height: 46px; border-radius: 50%; background: radial-gradient(circle at 50% 70%, #5ccf68, #2ea34a); border: 1px solid #fff; box-shadow: 0 1px 2px #000; box-sizing: border-box; color: #fff; text-align: center; font: italic bold 11px/14px 'Liberation Sans', sans-serif; padding-top: 27px; }
    .ime { position: absolute; left: 840px; top: 38px; width: 166px; height: 24px; background: #f2f6fb; border-right: 1px solid #a9bccf; border-bottom: 1px solid #c9d6e3; box-sizing: border-box; display: flex; align-items: center; padding-left: 16px; color: #1a73c8; }
    .ime .zh2 { font-size: 15px; font-weight: 700; width: 20px; flex: none; }
    .ime .dot { font: bold 13px/14px 'Liberation Sans', sans-serif; width: 23px; flex: none; padding-left: 4px; box-sizing: border-box; }
    .ime .icons { display: flex; align-items: center; gap: 3px; }
    .ime .wide { margin-left: 3px; }
    .s-logo { position: absolute; left: 823px; top: 38px; width: 26px; height: 23px; border-radius: 4px; background: linear-gradient(135deg, #f7502a, #e8261c); transform: rotate(-8deg); color: #fff; font: italic 900 22px/23px 'Liberation Sans', sans-serif; text-align: center; }
  `;

  render() {
    return html`
      <div class="title">
        <div class="logo">P</div>
        <div class="name">${mixed('1475927706320.pdf - PDF 快速看图 v1.9')}</div>
        <div class="win">
          <svg width="116" height="24" viewBox="1250 0 116 24" fill="none" stroke="#dcdcdc" stroke-width="1.2">
            <path d="M1257 6.5c-2.5 0-3.500 2-3.500 4 0 2 1 3 1.500 4l-4 3v2.500h12v-2.500l-4-3c.5-1 1.500-2 1.500-4 0-2-1-4-3.500-4z"/>
            <path fill="#fff" stroke="none" d="M1276 8h11v2h-11zM1276 12h11l-5.5 5z"/>
            <path stroke="#fff" stroke-width="2" d="M1301 16h7"/>
            <path stroke="#eee" d="M1325.5 11.5h5.5v5.5h-5.5zM1328 11V9h5.5v5.5h-2"/>
            <path stroke="#fff" stroke-width="1.6" d="M1349.5 9l7 7M1356.5 9l-7 7"/>
          </svg>
        </div>
      </div>

      <div class="tools">
        ${tools.map(t => t.sep
          ? html`<div class="sep"></div>`
          : html`<div class="tool" style="width:${t.w}px">
              ${t.icon ? html`<svg viewBox="0 0 30 26">${t.icon}</svg>` : ''}
              ${t.label ? html`<span>${t.label}</span>` : ''}
            </div>`)}
      </div>

      <div class="main">
        <div class="side">
          <h4>目录</h4>
          ${outline.map(([text, arrow]) => html`
            <div class="row"><div class="arrow">${arrow ? html`<i></i>` : ''}</div><div>${mixed(text)}</div></div>`)}
        </div>
        <div class="track"><div class="thumb"></div></div>
        <div class="grip">
          <svg width="10" height="14" viewBox="0 0 10 14" fill="none" stroke="#e0e0e0" stroke-width="1.4"><path d="M8 2L3 7l5 5"/></svg>
        </div>
        <div class="view">
          <div class="pages">
            <svg width="842" height="570" viewBox="396 75 842 570">${drawing()}</svg>
            <svg width="842" height="51" viewBox="396 650 842 51">${nextPage()}</svg>
          </div>
          <div class="vbar"><i></i></div>
        </div>
      </div>

      <div class="status">
        <div class="size">${mixed('页面大小: 25.84×18.61 厘米')}</div>
        <div class="caret"></div>
        <div class="pager">
          <svg width="12" height="12" viewBox="0 0 12 12" fill="none" stroke="#ddd" stroke-width="1.4"><path d="M8 1.5L3.5 6 8 10.5"/></svg>
          <div class="input">69</div>
          <div class="of">${mixed('/ 124')}</div>
          <svg width="12" height="12" viewBox="0 0 12 12" fill="none" stroke="#ddd" stroke-width="1.4"><path d="M4 1.5L8.5 6 4 10.5"/></svg>
        </div>
        <div class="right">
          <div class="rule"></div>
          <div class="layout">
            <svg width="16" height="16" viewBox="0 0 16 16" fill="none" stroke="#777"><rect x=".5" y=".5" width="6" height="15"/><rect x="9.5" y=".5" width="6" height="15"/><path stroke="#aaa" stroke-dasharray="1 1.5" d="M2 2.5h3M2 5h3M2 7.5h3M2 10h3M2 12.5h3M11 2.5h3M11 5h3M11 7.5h3M11 10h3M11 12.5h3"/></svg>
            <svg width="23" height="19" viewBox="0 0 23 19" fill="none"><rect width="23" height="19" fill="#6a6a6a"/><path stroke="#bbb" d="M5 3h13M5 5.5h13M5 12h13M5 14.5h13"/><path stroke="#333" d="M2 9.5h19"/></svg>
          </div>
          <div class="rule"></div>
          <div class="zoom"><span>−</span><span class="l">86%</span><svg width="12" height="12" viewBox="0 0 12 12" stroke="#ccc" stroke-width="1.3"><path d="M6 1v10M1 6h10"/></svg></div>
        </div>
      </div>

      <div class="task">
        <div class="start"><svg width="16" height="16" viewBox="0 0 16 16">${win4(0, 0, 16)}</svg></div>
        <div class="search">
          <div class="cortana"></div>
          在这里输入你要搜索的内容
          <svg width="12" height="16" viewBox="0 0 12 16" fill="none" stroke="#aaa"><rect x="3.5" y=".5" width="5" height="10" rx="2.5"/><path d="M1 7c0 3 2 5 5 5s5-2 5-5M6 12v3M3.5 15.5h5"/></svg>
        </div>
        ${placed([
          { c: 418, w: 46, t: bar.pin },
          { c: 466, w: 46, t: bar.swirl },
          { c: 520, w: 46, t: bar.edge },
          { c: 567, w: 46, t: bar.store },
          { c: 615, w: 40, t: bar.explorer },
          { c: 664.5, w: 40, t: html`${bar.g1}<div class="ul"></div>` },
          { c: 712.5, w: 40, t: html`${bar.g2}<div class="ul"></div>` },
          { c: 759, w: 38, t: html`${bar.blue}<div class="ul"></div>` },
          { c: 806.5, w: 39, t: html`${bar.note}<div class="ul"></div>` },
          { c: 853, w: 40, t: bar.ie },
          { c: 900, w: 40, t: html`${bar.green}<div class="ul"></div>` },
          { c: 947, w: 46, t: html`<div class="appbox"><div class="appicon">PDF</div></div><div class="ul"></div>` },
        ], 392)}
        <div class="cpu">4%<b>CPU使用</b></div>
        ${placed([
          { c: 1066, w: 20, t: tray.up },
          { c: 1090, w: 24, t: tray.batt },
          { c: 1116, w: 20, t: tray.wifi },
          { c: 1137, w: 18, t: tray.sound },
          { c: 1165, w: 26, t: tray.kbd },
          { c: 1193, w: 20, t: html`<span class="zh">中</span>` },
          { c: 1222, w: 20, t: html`<svg width="16" height="16" viewBox="0 0 16 16"><rect x="1" y="1" width="14" height="14" rx="2.5" fill="#ee4a1e" transform="rotate(-8 8 8)"/><path fill="none" stroke="#fff" stroke-width="2.2" d="M11.5 5C9 3.5 5 4 5 6s6 1.5 6 4-4 2.5-6.5 1"/></svg>` },
        ], 1056)}
        <div class="clock">10:38<br />2017/10/7</div>
        <div class="notify">
          <svg width="18" height="16" viewBox="0 0 18 16"><path fill="#fff" d="M0 0h16v11H9l-3 4v-4H0z"/><path stroke="#030e14" d="M3 3.5h10M3 6h10"/></svg>
          <b>6</b>
        </div>
      </div>

      <div class="badge">77</div>
      <div class="ime">
        <span class="zh2">中</span><span class="dot">°,</span>
        <div class="icons">
          <svg width="14" height="17" viewBox="0 0 14 17" fill="#1a73c8"><rect x="4" width="6" height="11" rx="3"/><path fill="none" stroke="#1a73c8" stroke-width="1.5" d="M1 7c0 4 2.5 6 6 6s6-2 6-6M7 13v3"/><path d="M3 15.5h8V17H3z"/></svg>
          <svg class="wide" width="20" height="14" viewBox="0 0 20 14"><rect x=".5" y=".5" width="19" height="13" rx="2" fill="#1a73c8"/><path stroke="#fff" stroke-width="1.4" stroke-dasharray="2 1" d="M3 4h14M3 7h14"/><path stroke="#fff" stroke-width="1.4" d="M5 10.5h10"/></svg>
          <svg width="18" height="16" viewBox="0 0 18 16"><circle cx="6" cy="3.5" r="3" fill="#a8bdd0"/><path fill="#a8bdd0" d="M1 13c0-4 2-5 5-5s4 1 5 2v3z"/><rect x="8" y="9" width="10" height="7" fill="#f2f6fb" stroke="#a8bdd0"/><path stroke="#8aa2b8" d="M10.5 10.5v4M13 10.5h3v4h-3z"/></svg>
          <svg width="16" height="15" viewBox="0 0 16 15" fill="#1a73c8"><path d="M5 0L0 3l2 3.5 2-1V15h8V5.5l2 1L16 3l-5-3c-1 2-5 2-6 0z"/></svg>
          <svg class="wide" width="16" height="16" viewBox="0 0 16 16" fill="none" stroke="#1a73c8" stroke-width="3"><path d="M2 14l7-7"/><path stroke-width="2.5" d="M9 7c-1-3 1-6 5-5L11.5 4.5l1 1.5 2-.5c.5 3-3 4-5.500 2z"/></svg>
        </div>
      </div>
      <div class="s-logo">S</div>
    `;
  }
}
